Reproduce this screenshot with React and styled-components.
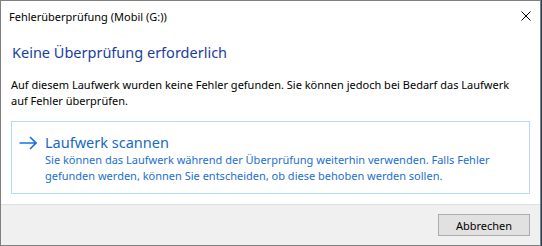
import React from "react";
import styled, { createGlobalStyle } from "styled-components";

const GlobalStyle = createGlobalStyle`
  html, body { margin: 0; padding: 0; }
  body {
    background: #24405a;
    font-family: "Noto Sans", "Segoe UI", sans-serif;
    -webkit-font-smoothing: antialiased;
  }
`;

const Window = styled.div`
  box-sizing: border-box;
  width: 541px;
  height: 246px;
  border: 1px solid #7f7f7f;
  background: #ffffff;
  display: flex;
  flex-direction: column;
`;

const TitleBar = styled.div`
  height: 30px;
  display: flex;
  align-items: center;
  justify-content: space-between;
  padding: 0 8px 0 8px;
`;

const Title = styled.span`
  font-size: 11px;
  color: #000;
  line-height: 30px;
  padding-top: 1px;
`;

const CloseButton = styled.button`
  border: 0;
  background: transparent;
  padding: 0;
  width: 10px;
  height: 10px;
  margin-right: 1px;
  margin-bottom: 1px;
  display: flex;
  align-items: center;
  justify-content: center;
  cursor: default;
`;

const Content = styled.div`
  flex: 1;
  padding: 0 10px;
  display: flex;
  flex-direction: column;
`;

const Heading = styled.h1`
  margin: 10px 0 0 1px;
  font-size: 14.5px;
  line-height: 22px;
  font-weight: 400;
  color: #1a3e9e;
`;

const Body = styled.p`
  margin: 14px 0 0 0;
  font-size: 11px;
  line-height: 16px;
  color: #000;
  white-space: nowrap;
`;

const CommandLink = styled.div`
  box-sizing: border-box;
  margin-top: 12px;
  height: 73px;
  border: 1px solid #b8dbf4;
  display: flex;
  align-items: flex-start;
  gap: 8px;
  padding: 10px 8px 0 7px;
`;

const ArrowIcon = styled.svg`
  flex: none;
  margin-top: 4px;
`;

const LinkText = styled.div`
  display: flex;
  flex-direction: column;
`;

const LinkTitle = styled.span`
  font-size: 14.5px;
  line-height: 20px;
  color: #1569c7;
`;

const LinkDesc = styled.span`
  font-size: 11px;
  line-height: 16px;
  color: #1a6fcf;
  white-space: nowrap;
`;

const Footer = styled.div`
  height: 40px;
  border-top: 1px solid #dfdfdf;
  background: #f0f0f0;
  display: flex;
  align-items: center;
  justify-content: flex-end;
  padding-right: 10px;
`;

const Button = styled.button`
  box-sizing: border-box;
  width: 92px;
  height: 22px;
  border: 1px solid #adadad;
  background: #e1e1e1;
  font-family: inherit;
  font-size: 11px;
  color: #000;
  padding: 0;
`;

export default function App() {
  return (
    <>
      <GlobalStyle />
      <Window>
        <TitleBar>
          <Title>Fehlerüberprüfung (Mobil (G:))</Title>
          <CloseButton aria-label="Schließen">
            <svg width="10" height="10" viewBox="0 0 10 10">
              <path d="M0.5 0.5 L9.5 9.5 M9.5 0.5 L0.5 9.5" stroke="#000" strokeWidth="1" fill="none" />
            </svg>
          </CloseButton>
        </TitleBar>
        <Content>
          <Heading>Keine Überprüfung erforderlich</Heading>
          <Body>
            Auf diesem Laufwerk wurden keine Fehler gefunden. Sie können jedoch bei Bedarf das Laufwerk
            <br />
            auf Fehler überprüfen.
          </Body>
          <CommandLink>
            <ArrowIcon width="18" height="14" viewBox="0 0 18 14">
              <path d="M0.5 7 H17 M11 1 L17 7 L11 13" stroke="#1a73d9" strokeWidth="1.6" fill="none" />
            </ArrowIcon>
            <LinkText>
              <LinkTitle>Laufwerk scannen</LinkTitle>
              <LinkDesc>
                Sie können das Laufwerk während der Überprüfung weiterhin verwenden. Falls Fehler
                <br />
                gefunden werden, können Sie entscheiden, ob diese behoben werden sollen.
              </LinkDesc>
            </LinkText>
          </CommandLink>
        </Content>
        <Footer>
          <Button>Abbrechen</Button>
        </Footer>
      </Window>
    </>
  );
}
